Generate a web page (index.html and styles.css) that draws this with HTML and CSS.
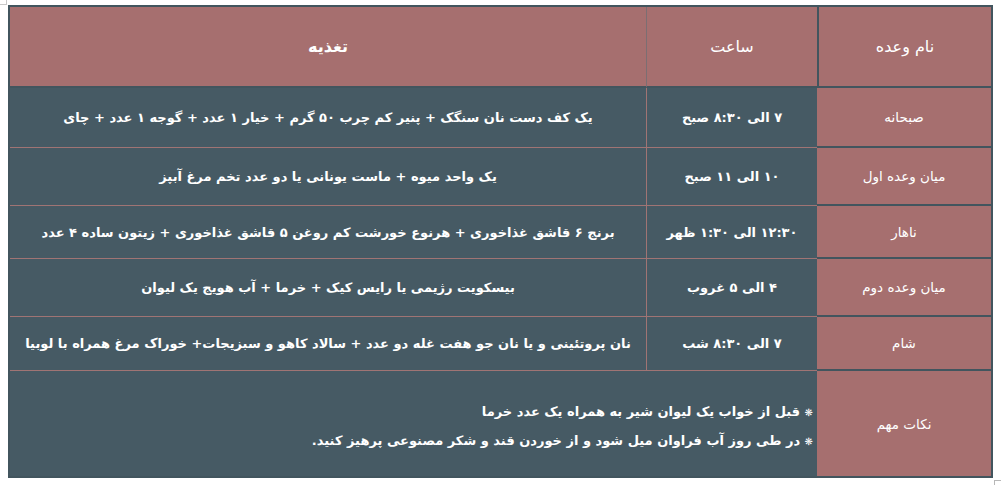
FILE: index.html
```html
<!DOCTYPE html>
<html lang="fa">
<head>
<meta charset="utf-8">
<link rel="stylesheet" href="styles.css">
</head>
<body>
<span class="handle-tl"></span>
<div class="table" dir="rtl">
  <div class="cell name head">نام وعده</div>
  <div class="cell time head">ساعت</div>
  <div class="cell food head bold">تغذیه</div>

  <div class="cell name r1">صبحانه</div>
  <div class="cell time r1">۷ الی ۸:۳۰ صبح</div>
  <div class="cell food r1">یک کف دست نان سنگک + پنیر کم چرب ۵۰ گرم + خیار ۱ عدد + گوجه ۱ عدد + چای</div>

  <div class="cell name r2">میان وعده اول</div>
  <div class="cell time r2">۱۰ الی ۱۱ صبح</div>
  <div class="cell food r2">یک واحد میوه + ماست یونانی یا دو عدد تخم مرغ آبپز</div>

  <div class="cell name r3">ناهار</div>
  <div class="cell time r3">۱۲:۳۰ الی ۱:۳۰ ظهر</div>
  <div class="cell food r3">برنج ۶ قاشق غذاخوری + هرنوع خورشت کم روغن ۵ قاشق غذاخوری + زیتون ساده ۴ عدد</div>

  <div class="cell name r4">میان وعده دوم</div>
  <div class="cell time r4">۴ الی ۵ غروب</div>
  <div class="cell food r4">بیسکویت رژیمی یا رایس کیک + خرما + آب هویج یک لیوان</div>

  <div class="cell name r5">شام</div>
  <div class="cell time r5">۷ الی ۸:۳۰ شب</div>
  <div class="cell food r5">نان پروتئینی و یا نان جو هفت غله دو عدد + سالاد کاهو و سبزیجات+ خوراک مرغ همراه با لوبیا</div>

  <div class="cell name last">نکات مهم</div>
  <div class="cell notes last">
    <p><span class="star">❋</span> قبل از خواب یک لیوان شیر به همراه یک عدد خرما</p>
    <p><span class="star">❋</span> در طی روز آب فراوان میل شود و از خوردن قند و شکر مصنوعی پرهیز کنید.</p>
  </div>
</div>
<span class="handle-br"></span>
</body>
</html>
```

FILE: styles.css
```css
html, body {
  margin: 0;
  padding: 0;
  background: #ffffff;
}
body {
  font-family: "DejaVu Sans", "Noto Sans", sans-serif;
  color: #ffffff;
  position: relative;
  width: 1003px;
  height: 485px;
  overflow: hidden;
}
.handle-tl {
  position: absolute;
  left: 0;
  top: 0;
  width: 6px;
  height: 4px;
  border-right: 1px solid #c8c8c8;
  border-bottom: 1px solid #c8c8c8;
}
.handle-br {
  position: absolute;
  left: 994px;
  top: 480px;
  width: 6px;
  height: 5px;
  border-left: 1px solid #b8b8b8;
  border-top: 1px solid #b8b8b8;
}
.table {
  margin: 5px 0 0 8px;
  width: 981px;
  border: 2px solid #42555e;
  background: #465a64;
  display: grid;
  grid-template-columns: 174px 171px 1fr;
  grid-template-rows: 81px 60px 58px 53px 58px 54px 105px;
}
.cell {
  display: flex;
  align-items: center;
  justify-content: center;
  box-sizing: border-box;
  font-size: 13px;
  font-weight: bold;
  text-align: center;
  white-space: nowrap;
}
.name {
  background: #a66f6f;
  border-bottom: 2px solid #42555e;
  font-weight: normal;
  font-size: 13.5px;
}
.time, .food, .notes {
  background: #465a64;
  border-bottom: 1px solid #a07474;
}
.time {
  border-left: 1px solid #a07474;
}
.head {
  background: #a66f6f;
  font-size: 16px;
  font-weight: normal;
  border-bottom: 2px solid #42555e;
}
.head.bold {
  font-weight: bold;
}
.head.name {
  border-left: 2px solid #42555e;
}
.head.time {
  border-left: 1px solid #7c6e72;
}
.last {
  border-bottom: none;
}
.notes {
  grid-column: span 2;
  flex-direction: column;
  align-items: flex-start;
  justify-content: center;
  padding-right: 4px;
  padding-top: 6px;
  gap: 8px;
  text-align: right;
}
.notes p {
  margin: 0;
  line-height: 20px;
}
.star {
  font-size: 10px;
  font-weight: normal;
}
```
